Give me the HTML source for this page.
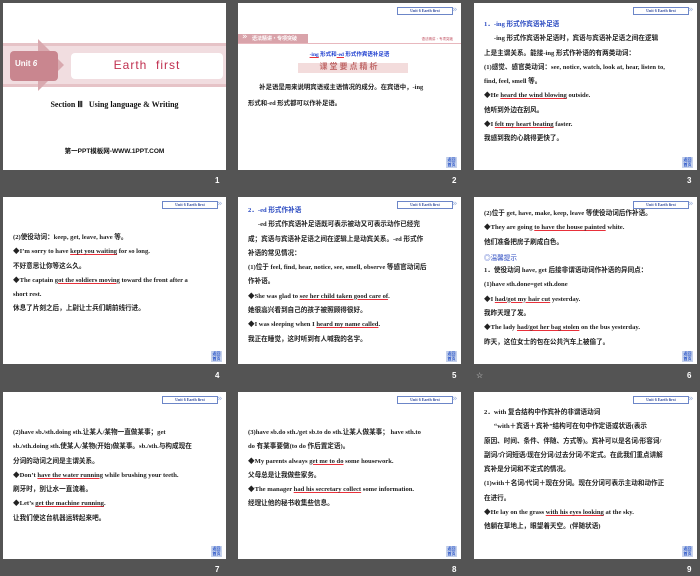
<!DOCTYPE html>
<html><head><meta charset="utf-8"><style>
*{margin:0;padding:0;box-sizing:border-box}
body{width:700px;height:576px;background:#545454;position:relative;overflow:hidden;font-family:"Liberation Serif","Noto Serif CJK SC",serif}
.s{position:absolute;width:223px;height:167px;background:#fff;overflow:hidden}
.n{position:absolute;color:#fff;font:bold 8px "Liberation Sans",sans-serif}
.tag{position:absolute;left:159px;top:4px;width:56px;height:8px;border:1px solid #6c86c8;background:#fff;font:bold 4px/6px "Liberation Serif",serif;color:#3850a0;text-align:center}
.chev{position:absolute;left:214px;top:3px;color:#9fb3dd;font:9px/9px "DejaVu Sans",sans-serif;letter-spacing:-4px}
.ic{position:absolute;left:208px;top:154px;width:11px;height:11px;background:#c6d2ec;color:#2a55c8;font:bold 4px/5px "Noto Sans CJK SC",sans-serif;text-align:center;padding-top:1px}
.t{position:absolute;left:10px;right:9px;font:bold 6.6px/14.3px "Liberation Serif","Noto Sans CJK SC",serif;color:#222;text-align:justify}
.t p{white-space:nowrap}
.u{text-decoration:underline;text-decoration-color:#e8303a}
.b{color:#2848c0}
</style></head><body>

<!-- slide 1 -->
<div class="s" style="left:3px;top:3px">
 <div style="position:absolute;left:0;top:40px;width:223px;height:44px;background:#e6c3c7"></div>
 <div style="position:absolute;left:0;top:43px;width:223px;height:38px;background:#f1dde0"></div>
 <div style="position:absolute;left:35px;top:36px;width:0;height:0;border-top:26px solid transparent;border-bottom:26px solid transparent;border-left:26px solid #d9a9af"></div>
 <div style="position:absolute;left:7px;top:48px;width:48px;height:30px;background:#c9868f;border-radius:4px"></div>
 <div style="position:absolute;left:12px;top:56px;color:#fff;font:bold 8px 'Liberation Sans',sans-serif">Unit <i>6</i></div>
 <div style="position:absolute;left:68px;top:50px;width:152px;height:26px;background:#fff;border-radius:4px"></div>
 <div style="position:absolute;left:68px;top:55px;width:152px;text-align:center;color:#c03050;font:12px 'Liberation Sans',sans-serif;letter-spacing:1px">Earth&nbsp; first</div>
 <div style="position:absolute;left:0;width:223px;top:97px;text-align:center;font:bold 8px 'Liberation Serif',serif;color:#111">Section Ⅲ &nbsp; Using language &amp; Writing</div>
 <div style="position:absolute;left:0;width:223px;top:142px;text-align:center;font:bold 6.5px 'Liberation Sans','Noto Sans CJK SC',sans-serif;color:#111">第一PPT模板网-WWW.1PPT.COM</div>
</div>
<div class="n" style="left:215px;top:176px">1</div>

<!-- slide 2 -->
<div class="s" style="left:238px;top:3px">
 <div class="tag">Unit 6 Earth first</div><div class="chev">»</div>
 <div style="position:absolute;left:0;top:31px;width:70px;height:9px;background:#d9a3aa"></div>
 <div style="position:absolute;left:0;top:40px;width:223px;height:1px;background:#e8b8be"></div>
 <div style="position:absolute;left:4px;top:29px;color:#fff;font:9px/11px 'DejaVu Sans',sans-serif">»</div>
 <div style="position:absolute;left:14px;top:32px;color:#fff;font:bold 5px 'Noto Sans CJK SC',sans-serif">语法精讲·专项突破</div>
 <div style="position:absolute;right:8px;top:34px;color:#c05060;font:3.5px 'Noto Sans CJK SC',sans-serif">语法精讲·专项突破</div>
 <div style="position:absolute;left:0;width:223px;top:47px;text-align:center;color:#2040d0;font:bold 5.5px 'Liberation Serif','Noto Sans CJK SC',serif"><span class="u">-ing</span> 形式和<span class="u">-ed</span> 形式作宾语补足语</div>
 <div style="position:absolute;left:60px;top:60px;width:110px;height:10px;background:#f3dcdc"></div>
 <div style="position:absolute;left:0;width:223px;top:58px;text-align:center;color:#c06a6a;font:bold 8px 'Noto Sans CJK SC',sans-serif;letter-spacing:2px">课堂要点精析</div>
 <div class="t" style="top:77px;line-height:16px;font-size:6.4px"><p>&nbsp;&nbsp;&nbsp;&nbsp;&nbsp;&nbsp;&nbsp;补足语是用来说明宾语或主语情况的成分。在宾语中，-ing</p><p>形式和-ed 形式都可以作补足语。</p></div>
 <div class="ic">返回<br>首页</div>
</div>
<div class="n" style="left:452px;top:176px">2</div>

<!-- slide 3 -->
<div class="s" style="left:474px;top:3px">
 <div class="tag">Unit 6 Earth first</div><div class="chev">»</div>
 <div class="t" style="top:15px"><p class="b">1．-ing 形式作宾语补足语</p>
 <p>&nbsp;&nbsp;&nbsp;&nbsp;&nbsp;&nbsp;-ing 形式作宾语补足语时，宾语与宾语补足语之间在逻辑</p>
 <p>上是主谓关系。能接-ing 形式作补语的有两类动词：</p>
 <p>(1)感觉、感官类动词：see, notice, watch, look at, hear, listen to,</p>
 <p>find, feel, smell 等。</p>
 <p>◆He <span class="u">heard the wind blowing</span> outside.</p>
 <p>他听到外边在刮风。</p>
 <p>◆I <span class="u">felt my heart beating</span> faster.</p>
 <p>我感到我的心跳得更快了。</p></div>
 <div class="ic">返回<br>首页</div>
</div>
<div class="n" style="left:687px;top:176px">3</div>

<!-- slide 4 -->
<div class="s" style="left:3px;top:197px">
 <div class="tag">Unit 6 Earth first</div><div class="chev">»</div>
 <div class="t" style="top:34px"><p>(2)使役动词：keep, get, leave, have 等。</p>
 <p>◆I’m sorry to have <span class="u">kept you waiting</span> for so long.</p>
 <p>不好意思让你等这么久。</p>
 <p>◆The captain <span class="u">got the soldiers moving</span> toward the front after a</p>
 <p>short rest.</p>
 <p>休息了片刻之后，上尉让士兵们朝前线行进。</p></div>
 <div class="ic">返回<br>首页</div>
</div>
<div class="n" style="left:215px;top:371px">4</div>

<!-- slide 5 -->
<div class="s" style="left:238px;top:197px">
 <div class="tag">Unit 6 Earth first</div><div class="chev">»</div>
 <div class="t" style="top:7px"><p class="b">2．-ed 形式作补语</p>
 <p>&nbsp;&nbsp;&nbsp;&nbsp;&nbsp;&nbsp;-ed 形式作宾语补足语既可表示被动又可表示动作已经完</p>
 <p>成；宾语与宾语补足语之间在逻辑上是动宾关系。-ed 形式作</p>
 <p>补语的常见情况：</p>
 <p>(1)位于 feel, find, hear, notice, see, smell, observe 等感官动词后</p>
 <p>作补语。</p>
 <p>◆She was glad to <span class="u">see her child taken good care of</span>.</p>
 <p>她很高兴看到自己的孩子被照顾得很好。</p>
 <p>◆I was sleeping when I <span class="u">heard my name called</span>.</p>
 <p>我正在睡觉，这时听到有人喊我的名字。</p></div>
 <div class="ic">返回<br>首页</div>
</div>
<div class="n" style="left:452px;top:371px">5</div>

<!-- slide 6 -->
<div class="s" style="left:474px;top:197px">
 <div class="tag">Unit 6 Earth first</div><div class="chev">»</div>
 <div class="t" style="top:10px"><p>(2)位于 get, have, make, keep, leave 等使役动词后作补语。</p>
 <p>◆They are going <span class="u">to have the house painted</span> white.</p>
 <p>他们准备把房子刷成白色。</p>
 <p class="b" style="font-family:'Noto Sans CJK SC',sans-serif;font-weight:normal">◎温馨提示</p>
 <p>1．使役动词 have, get 后接非谓语动词作补语的异同点：</p>
 <p>(1)have sth.done=get sth.done</p>
 <p>◆I <span class="u">had/got my hair cut</span> yesterday.</p>
 <p>我昨天理了发。</p>
 <p>◆The lady <span class="u">had/got her bag stolen</span> on the bus yesterday.</p>
 <p>昨天，这位女士的包在公共汽车上被偷了。</p></div>
 <div class="ic">返回<br>首页</div>
</div>
<div class="n" style="left:476px;top:371px;font-weight:normal;color:#ddd">☆</div>
<div class="n" style="left:687px;top:371px">6</div>

<!-- slide 7 -->
<div class="s" style="left:3px;top:392px">
 <div class="tag">Unit 6 Earth first</div><div class="chev">»</div>
 <div class="t" style="top:34px"><p>(2)have sb./sth.doing sth.让某人/某物一直做某事；get</p>
 <p>sb./sth.doing sth.使某人/某物(开始)做某事。sb./sth.与构成现在</p>
 <p>分词的动词之间是主谓关系。</p>
 <p>◆Don’t <span class="u">have the water running</span> while brushing your teeth.</p>
 <p>刷牙时，别让水一直流着。</p>
 <p>◆Let’s <span class="u">get the machine running</span>.</p>
 <p>让我们使这台机器运转起来吧。</p></div>
 <div class="ic">返回<br>首页</div>
</div>
<div class="n" style="left:215px;top:565px">7</div>

<!-- slide 8 -->
<div class="s" style="left:238px;top:392px">
 <div class="tag">Unit 6 Earth first</div><div class="chev">»</div>
 <div class="t" style="top:34px"><p>(3)have sb.do sth./get sb.to do sth.让某人做某事； have sth.to</p>
 <p>do 有某事要做(to do 作后置定语)。</p>
 <p>◆My parents always <span class="u">get me to do</span> some housework.</p>
 <p>父母总是让我做些家务。</p>
 <p>◆The manager <span class="u">had his secretary collect</span> some information.</p>
 <p>经理让他的秘书收集些信息。</p></div>
 <div class="ic">返回<br>首页</div>
</div>
<div class="n" style="left:452px;top:565px">8</div>

<!-- slide 9 -->
<div class="s" style="left:474px;top:392px">
 <div class="tag">Unit 6 Earth first</div><div class="chev">»</div>
 <div class="t" style="top:14px"><p>2．with 复合结构中作宾补的非谓语动词</p>
 <p>&nbsp;&nbsp;&nbsp;&nbsp;&nbsp;&nbsp;“with＋宾语＋宾补”结构可在句中作定语或状语(表示</p>
 <p>原因、时间、条件、伴随、方式等)。宾补可以是名词/形容词/</p>
 <p>副词/介词短语/现在分词/过去分词/不定式。在此我们重点讲解</p>
 <p>宾补是分词和不定式的情况。</p>
 <p>(1)with＋名词/代词＋现在分词。现在分词可表示主动和动作正</p>
 <p>在进行。</p>
 <p>◆He lay on the grass <span class="u">with his eyes looking</span> at the sky.</p>
 <p>他躺在草地上，眼望着天空。(伴随状语)</p></div>
 <div class="ic">返回<br>首页</div>
</div>
<div class="n" style="left:687px;top:565px">9</div>

</body></html>
